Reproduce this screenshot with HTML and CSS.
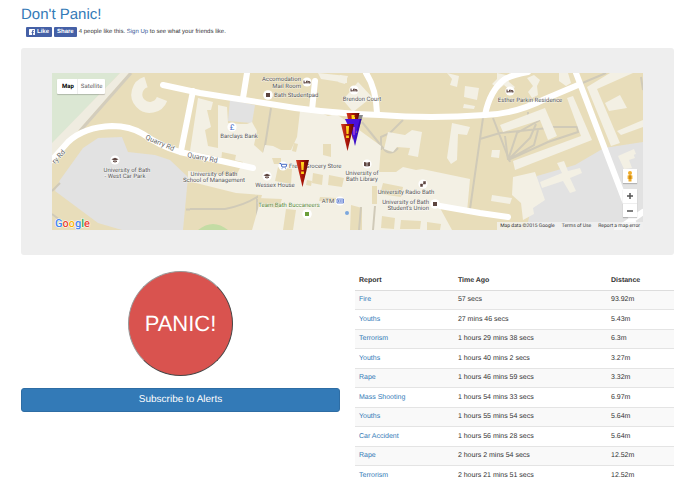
FILE: index.html
```html
<!DOCTYPE html>
<html lang="en">
<head>
  <meta charset="UTF-8">
  <meta name="viewport" content="width=device-width, initial-scale=1.0">
  <title>Don't Panic!</title>
  <link rel="stylesheet" href="styles.css">
</head>
<body>
  <div class="container">
    <!-- Header Section -->
    <header>
      <h1><a href="#">Don't Panic!</a></h1>
      <div class="fb-bar">
        <button type="button" class="fb-btn">
          <svg class="fb-icon" viewBox="0 0 12 12" aria-hidden="true">
            <rect width="12" height="12" rx="1" fill="#fff"/>
            <path d="M6.2 12V7.6H4.8V5.8h1.4V4.6c0-1.7 1-2.6 2.5-2.6h1.4v1.7h-.9c-.8 0-1 .4-1 1v1.1H10l-.2 1.8H8.2V12z" fill="#4560a6"/>
          </svg>
          Like
        </button>
        <button type="button" class="fb-btn">Share</button>
        <p>4 people like this. <a href="#">Sign Up</a> to see what your friends like.</p>
      </div>
    </header>

    <!-- Map Section -->
    <section class="jumbotron">
      <div class="map">
        <svg class="map-canvas" viewBox="52 73 591 157" preserveAspectRatio="xMidYMid slice" role="img" aria-label="Map of reports">
          <defs>
            <linearGradient id="pin-red" x1="0" x2="1">
              <stop offset="0" stop-color="#d23a20"/>
              <stop offset=".5" stop-color="#a81408"/>
              <stop offset="1" stop-color="#5c0800"/>
            </linearGradient>
            <linearGradient id="pin-blue" x1="0" x2="1">
              <stop offset="0" stop-color="#5a20f0"/>
              <stop offset="1" stop-color="#2400a0"/>
            </linearGradient>
            <g id="pin-shape">
              <path d="M-6.5 0H6.5L0 27z"/>
              <path d="M-1.6 2H1.6L1 10H-1zM-1.4 11.5H1.4V14H-1.4z" fill="#ffd21a"/>
            </g>
            <g id="bed">
              <circle r="4.6" fill="#fff"/>
              <path d="M-3-1.5v3M-3 .8h6M3 1.5V-.2L-.5-1v1.6" fill="none" stroke="#5d4540"/>
            </g>
            <g id="school">
              <circle r="4.6" fill="#fff"/>
              <path d="M-3.6-.7L0-2.2 3.6-.7 0 .8zM-2 .5L0 1.4 2 .5v1.2L0 2.6l-2-.9z" fill="#5d4540"/>
            </g>
            <g id="square">
              <circle r="4.8" fill="#fff"/>
              <path d="M-2-2h4v4h-4z"/>
            </g>
          </defs>

          <rect x="52" y="73" width="591" height="157" fill="#e8ddba"/>

          <!-- parks -->
          <path d="M52 73H120L52 144z" fill="#dbe7d3"/>
          <path d="M120 73H129L78 131 52 158V143z" fill="#efece0"/>
          <path d="M131 73L80 131" class="path-wide"/>
          <path d="M198 230q15-12 30 0zM628 230l15-9v9z" fill="#c3dca4"/>

          <!-- car parks -->
          <g fill="#e2e2e2">
            <path d="M98 138L122 137 128 152 155 155 170 160 188 177 183 230H122L98 223 55 191 60 180 83 148z"/>
            <path d="M230 100L255 105 252 123 228 121z"/>
            <path d="M537 176L575 165 604 148 643 142V230H526L532 205z"/>
          </g>

          <!-- footpaths -->
          <g class="footpath">
            <path d="M271 108L264 152M362 122L383 148q7 9 15 0M403 120L390 133 381 137V150M483 118L470 209M480 139L500 133M493 118L510 162M190 209L225 209Q245 205 257 197V230M52 191L60 183M52 214L60 220M190 209.500H186"/>
            <path d="M508 160L505 136M508 160L517 133 540 120M508 160L530 138 536 124M508 160L534 145 538 130M508 160L548 142 578 132 577 127 552 127M500 133L548 128M528 112V117M580 84L606 73M641 77L643 90"/>
          </g>

          <!-- campus buildings -->
          <g class="building">
            <path d="M146 82A13 13 0 1 0 162 99" fill="none" stroke="#f3f0e4" stroke-width="11"/>
            <path d="M198 98L213 102 211 110H207L211 127 205 130 208 146 218 148V105L227 107 228 123 240 124 247 124 252 122 257 131 254 145 263 153 265 145 273 146 281 150H291L297 137 300 111H316L328 116 336 114 351 124 381 146 379 172H396L403 167 416 170 422 169 470 179 467 212 440 208 452 230H252L262 195 236 193 188 181V171L200 172 236 176 243 162 190 151z"/>
            <path d="M318 73L347 76V83L321 79zM340 75L348 76 345 84 338 82z"/>
            <path d="M358 82L372 97 353 112 343 100z"/>
            <path d="M388 132L405 135 412 130 422 132 418 157 408 155 410 148 397 147 393 152 384 149zM465 86L479 88 477 100 464 97zM464 104L475 106 474 109 463 108zM447 73L459 76 457 87 450 85 452 79zM452 123L470 127 467 135 458 134 457 160 451 164 447 158z"/>
            <path d="M500 125L545 108 557 136 548 140 540 120 503 132zM567 98L573 96 592 140 515 170 513 161 581 136zM587 87L610 73H633L597 89 620 143 611 146zM605 103L620 95 627 108 609 111zM617 131L643 120V127L621 135z"/>
            <path d="M513 177L535 172 545 200 533 208 534 214 523 220 521 203 512 195zM540 182L562 173 557 163 564 161 568 171 580 168 582 173 570 178 576 191 570 193 563 181 542 188zM618 156L634 149 636 154 628 157 632 168 624 169zM492 195L512 198 510 204 491 201zM492 150L500 150 499 158 491 157z"/>
            <path d="M497 73l9 2 3 7 6 5-4 4-7-6-5 4-7-5 5-5zM527 78l7-3 6 5-3 6 1 9-6 3-4-6 5-6zM559 73h9l3 10-5 3-7-5zM621 157l12-4 2 5-12 4z"/>
          </g>

          <!-- courtyards -->
          <g fill="#e8ddba">
            <path d="M222 152L236 155 234 165 221 162zM272 158H281V164H274zM278 167L292 169 291 184 275 181zM313 173L323 175 322 185 312 183zM329 175L344 178 342 187 328 185zM383 183L403 187 401 197 380 194zM382 216L395 218 394 229 381 228zM401 220L421 221 420 229H400zM351 205L362 208V230H350zM257 198L282 199 279 208 263 207zM286 209L296 210 293 230H283zM320 197L336 198 335 202 319 201zM307 180l5 1-1 5-5-1z"/>
            <path d="M323 144h8v13l-8-2zM294 143l4 1-2 8-4-1zM372 186h5v18h-5zM427 222l14 2-1 6h-13z"/>
          </g>
          <path d="M361 207L359 230M375 206L373 230" class="footpath"/>

          <!-- roads -->
          <g class="road">
            <path d="M52 160L68 142Q84 127 112 126Q130 126 143 134Q160 146 180 152L217 160 253 168"/>
            <path d="M163 85L200 93 270 104Q320 113 380 115Q430 119 485 115Q515 114 545 99L578 85"/>
            <path d="M193 91L181 151M247 73L243 98M315 81L312 110M366 73Q376 88 377 113M485 115Q490 90 505 79Q512 75 528 72M576 73L608 157 636 230M440 206L480 213 508 217M617 230L643 212"/>
          </g>

          <!-- places -->
          <use href="#school" x="115" y="160"/>
          <use href="#school" x="267" y="176"/>
          <use href="#bed" x="307" y="82"/>
          <use href="#bed" x="354" y="90"/>
          <use href="#bed" x="510" y="91"/>
          <use href="#square" x="268" y="95" fill="#5d4540"/>
          <use href="#square" x="435" y="204" fill="#5d4540"/>
          <use href="#square" x="307" y="214" fill="#6b9e3a"/>
          <circle cx="232" cy="127" r="4.600" fill="#fff"/>
          <text x="232" y="130" class="place pound">£</text>
          <circle cx="283" cy="166" r="4.600" fill="#fff"/>
          <path d="M279.500 163.500h1.500l1 3.500h4l.8-2.700h-5.300M282 168.500v.6M285.500 168.500v.6" fill="none" stroke="#4468c4"/>
          <circle cx="367" cy="164" r="4.600" fill="#fff"/>
          <path d="M364 162l2.700.6v4l-2.700-.6zM370 162l-2.700.6v4l2.700-.6z" fill="#5d4540"/>
          <circle cx="423" cy="184" r="4.600" fill="#fff"/>
          <path d="M420.500 184h2v2.500h-2zM423.500 181.500h2v2.500h-2zM421 186l4.500-4" fill="#5d4540" stroke="#5d4540" stroke-width=".5"/>
          <circle cx="340" cy="201" r="4.600" fill="#fff"/>
          <path d="M337 199h6.500v4H337z" fill="#dbe4fa" stroke="#5573cc" stroke-width=".8"/>
          <path d="M338.500 202v-2M340.200 202v-2M342 202v-2" stroke="#5573cc" stroke-width=".8"/>
          <circle cx="347" cy="213" r="2" fill="#7ba7dd"/>

          <g class="place">
            <text x="301" y="81" text-anchor="end">Accomodation</text>
            <text x="301" y="88" text-anchor="end">Mail Room</text>
            <text x="274" y="97" text-anchor="start">Bath Studentpad</text>
            <text x="362" y="101">Brendon Court</text>
            <text x="530" y="102">Esther Parkin Residence</text>
            <text x="239" y="138">Barclays Bank</text>
            <text x="127" y="172">University of Bath</text>
            <text x="125" y="178">- West Car Park</text>
            <text x="214" y="176">University of Bath</text>
            <text x="214" y="182">School of Management</text>
            <text x="275" y="187">Wessex House</text>
            <text x="289" y="168" text-anchor="start">Fresh Grocery Store</text>
            <text x="362" y="175">University of</text>
            <text x="362" y="181">Bath Library</text>
            <text x="406" y="194">University Radio Bath</text>
            <text x="429" y="204" text-anchor="end">University of Bath</text>
            <text x="429" y="210" text-anchor="end">Student's Union</text>
            <text x="328" y="203">ATM</text>
            <text x="289" y="207" class="green">Team Bath Buccaneers</text>
          </g>
          <g class="street">
            <text transform="translate(145 139) rotate(23)">Quarry Rd</text>
            <text transform="translate(187 157) rotate(11)">Quarry Rd</text>
            <text transform="translate(55 164) rotate(-48)">ry Rd</text>
          </g>

          <!-- report pins -->
          <path d="M350 115H363L357 135z" fill="#888"/>
          <use href="#pin-shape" x="353" y="113" fill="url(#pin-red)"/>
          <use href="#pin-shape" x="355" y="119" fill="url(#pin-blue)"/>
          <path d="M345 119h15l-6 20z" fill="#4a10dc"/>
          <path d="M352 117h3v2h-3z" fill="#ffd21a"/>
          <path d="M353 127h2l-.5 8h-1z" fill="#b04ad8"/>
          <use href="#pin-shape" x="347.500" y="124" fill="url(#pin-red)"/>
          <use href="#pin-shape" x="302.500" y="160" fill="url(#pin-red)"/>

          <text x="55" y="227" class="logo"><tspan fill="#4285f4">G</tspan><tspan fill="#ea4335">o</tspan><tspan fill="#fbb605">o</tspan><tspan fill="#4285f4">g</tspan><tspan fill="#34a853">l</tspan><tspan fill="#ea4335">e</tspan></text>
        </svg>

        <div class="map-type">
          <button type="button" class="active">Map</button>
          <button type="button">Satellite</button>
        </div>
        <div class="map-controls">
          <button type="button" aria-label="Street View">
            <svg viewBox="0 0 14 14" aria-hidden="true">
              <circle cx="7" cy="4" r="2" fill="#f0ac28"/>
              <path d="M4.600 6.500q2.400-1.200 4.800 0V10H8.500v2.500h-3V10h-.9z" fill="#f0ac28"/>
              <path d="M6 6.500h2V10H6z" fill="#c98a1c"/>
            </svg>
          </button>
          <div class="zoom">
            <button type="button" aria-label="Zoom in">
              <svg viewBox="0 0 14 14" aria-hidden="true"><path d="M4 7h6M7 4v6" stroke="#555" stroke-width="1.500"/></svg>
            </button>
            <button type="button" aria-label="Zoom out">
              <svg viewBox="0 0 14 14" aria-hidden="true"><path d="M4 7h6" stroke="#555" stroke-width="1.500"/></svg>
            </button>
          </div>
        </div>
        <div class="map-credits">
          <span>Map data ©2015 Google</span>
          <a href="#">Terms of Use</a>
          <a href="#">Report a map error</a>
        </div>
      </div>
    </section>

    <!-- Panic button and reports -->
    <main class="row">
      <div class="actions">
        <button type="button" class="panic-btn">PANIC!</button>
        <button type="button" class="subscribe-btn">Subscribe to Alerts</button>
      </div>

      <table class="reports">
        <thead>
          <tr><th class="col-report">Report</th><th class="col-time">Time Ago</th><th>Distance</th></tr>
        </thead>
        <tbody>
          <tr><td><a href="#">Fire</a></td><td>57 secs</td><td>93.92m</td></tr>
          <tr><td><a href="#">Youths</a></td><td>27 mins 46 secs</td><td>5.43m</td></tr>
          <tr><td><a href="#">Terrorism</a></td><td>1 hours 29 mins 38 secs</td><td>6.3m</td></tr>
          <tr><td><a href="#">Youths</a></td><td>1 hours 40 mins 2 secs</td><td>3.27m</td></tr>
          <tr><td><a href="#">Rape</a></td><td>1 hours 46 mins 59 secs</td><td>3.32m</td></tr>
          <tr><td><a href="#">Mass Shooting</a></td><td>1 hours 54 mins 33 secs</td><td>6.97m</td></tr>
          <tr><td><a href="#">Youths</a></td><td>1 hours 55 mins 54 secs</td><td>5.64m</td></tr>
          <tr><td><a href="#">Car Accident</a></td><td>1 hours 56 mins 28 secs</td><td>5.64m</td></tr>
          <tr><td><a href="#">Rape</a></td><td>2 hours 2 mins 54 secs</td><td>12.52m</td></tr>
          <tr><td><a href="#">Terrorism</a></td><td>2 hours 21 mins 51 secs</td><td>12.52m</td></tr>
        </tbody>
      </table>
    </main>
  </div>
</body>
</html>
```
FILE: styles.css
```css
/* Global Styles */
* {
  margin: 0;
  padding: 0;
  box-sizing: border-box;
}

body {
  background-color: #fff;
  color: #333;
  font-family: "Liberation Sans", Arial, sans-serif;
  font-size: 7px;
  line-height: 10px;
  text-rendering: geometricPrecision;
}

a {
  color: #337ab7;
  text-decoration: none;
}

button {
  border: 0;
  font-family: inherit;
  text-rendering: inherit;
  cursor: pointer;
}

.container {
  padding: 6px 21px;
}

/* Header */
h1 {
  font-size: 15px;
  font-weight: normal;
  line-height: 18px;
}

.fb-bar {
  display: flex;
  align-items: center;
  gap: 2px;
  margin: 3px 0 11px;
  padding-left: 5px;
  font-size: 6px;
}

.fb-bar a {
  color: #3b5998;
}

.fb-btn {
  display: flex;
  align-items: center;
  gap: 2px;
  height: 10px;
  padding: 0 3px;
  border-radius: 1px;
  background-color: #4560a6;
  color: #fff;
  font-size: 6px;
  font-weight: bold;
}

.fb-icon {
  width: 6px;
  height: 6px;
}

/* Map */
.jumbotron {
  padding: 25px 31px;
  border-radius: 3px;
  background-color: #eee;
}

.map {
  position: relative;
  font-family: Roboto, sans-serif;
  font-size: 6px;
}

.map-canvas {
  display: block;
  width: 100%;
}

.path-wide {
  fill: none;
  stroke: #d3cdbd;
  stroke-width: 3;
}

.footpath {
  fill: none;
  stroke: #d0cab8;
  stroke-width: 2;
}

.building {
  fill: #f3f0e4;
}

.road {
  fill: none;
  stroke: #fff;
  stroke-width: 6;
  stroke-linecap: round;
}

.place {
  fill: #555;
  font-size: 6px;
  text-anchor: middle;
  stroke: #fff;
  stroke-width: 1px;
  stroke-opacity: 0.6;
  paint-order: stroke;
}

.place .green {
  fill: #5b8a3a;
}

.pound {
  fill: #4468c4;
  font-size: 8px;
}

.street {
  fill: #666;
  font-size: 7px;
  stroke: #fff;
  stroke-width: 1px;
  paint-order: stroke;
}

.logo {
  font-size: 11px;
  font-weight: 500;
  stroke: #fff;
  stroke-width: 1px;
  paint-order: stroke;
}

.map-type {
  position: absolute;
  top: 6px;
  left: 5px;
  display: flex;
  border-radius: 1px;
  background-color: #fff;
  box-shadow: 0 1px 1px rgba(0, 0, 0, 0.2);
}

.map-type button {
  height: 15px;
  padding: 0 3px;
  background: none;
  color: #666;
  font-size: 6px;
}

.map-type .active {
  padding-left: 5px;
  border-right: 1px solid #eee;
  color: #000;
  font-weight: bold;
}

.map-controls {
  position: absolute;
  right: 6px;
  bottom: 13px;
  display: flex;
  flex-direction: column;
  gap: 6px;
}

.map-controls button {
  display: block;
  width: 14px;
  height: 14px;
  background-color: #fff;
  box-shadow: 0 1px 1px rgba(0, 0, 0, 0.2);
}

.map-controls svg {
  display: block;
}

.zoom button + button {
  border-top: 1px solid #eee;
}

.map-credits {
  position: absolute;
  right: 0;
  bottom: 0;
  display: flex;
  gap: 7px;
  padding: 0 3px;
  background-color: rgba(245, 245, 245, 0.7);
  font-size: 5px;
  line-height: 8px;
}

.map-credits,
.map-credits a {
  color: #333;
}

/* Panic button and reports */
.row {
  display: grid;
  grid-template-columns: 1fr 1fr;
  gap: 15px;
  margin-top: 16px;
}

.actions {
  display: flex;
  flex-direction: column;
  align-items: center;
  gap: 12px;
}

.panic-btn {
  width: 105px;
  height: 105px;
  border: 1px outset #999;
  border-radius: 50%;
  background-color: #d9534f;
  color: #fff;
  font-size: 22px;
}

.subscribe-btn {
  width: 100%;
  padding: 6px;
  border: 1px solid #2e6da4;
  border-radius: 3px;
  background-color: #337ab7;
  color: #fff;
  font-size: 10px;
  line-height: 10px;
}

.reports {
  width: 100%;
  border-collapse: separate;
  border-spacing: 0;
  table-layout: fixed;
}

.reports th,
.reports td {
  padding: 4px;
  text-align: left;
}

.reports th {
  padding-top: 5px;
  border-bottom: 1px solid #ddd;
}

.reports td {
  border-bottom: 1px solid #e4e4e4;
}

.reports tr:last-child td {
  border-bottom: 0;
}

.reports tbody tr:nth-child(odd) {
  background-color: #f9f9f9;
}

.reports tbody tr:nth-child(even) td {
  padding-top: 5px;
}

.col-report {
  width: 31%;
}

.col-time {
  width: 48%;
}
```
